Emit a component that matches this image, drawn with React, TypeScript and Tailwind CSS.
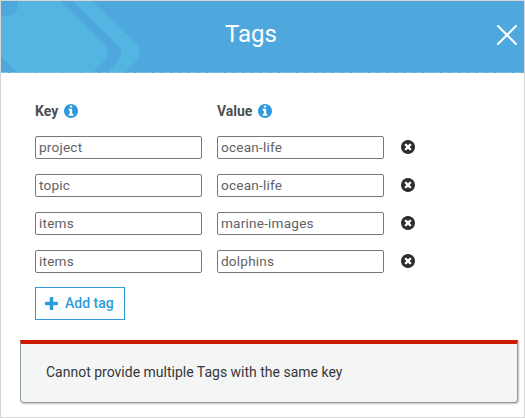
import React from "react";

const disc =
  "m387-226q0 209-103 385.5t-279.5 279.5-385.5 103-385.5-103-279.5-279.5-103-385.5 103-385.5 279.5-279.5 385.5-103 385.5 103 279.5 279.5 103 385.5z";

function InfoIcon() {
  return (
    <svg className="size-[14px] fill-[#2c9bdb]" viewBox="128 128 1536 1536">
      <path d="M1152 1376v-160q0-14-9-23t-23-9h-96v-512q0-14-9-23t-23-9h-320q-14 0-23 9t-9 23v160q0 14 9 23t23 9h96v320h-96q-14 0-23 9t-9 23v160q0 14 9 23t23 9h448q14 0 23-9t9-23zm-128-896v-160q0-14-9-23t-23-9h-192q-14 0-23 9t-9 23v160q0 14 9 23t23 9h192q14 0 23-9t9-23zm640 416q0 209-103 385.5t-279.5 279.5-385.5 103-385.5-103-279.5-279.5-103-385.5 103-385.5 279.5-279.5 385.5-103 385.5 103 279.5 279.5 103 385.5z" />
    </svg>
  );
}

function RemoveIcon() {
  return (
    <svg className="size-[14px] fill-[#2b2d30]" viewBox="128 128 1536 1536">
      <path
        d={
          "M1277 1122q0-26-19-45l-181-181 181-181q19-19 19-45 0-27-19-46l-90-90q-19-18-46-18-26 0-45 18l-181 181-181-181q-19-18-45-18-27 0-46 18l-90 90q-19 19-19 46 0 26 19 45l181 181-181 181q-19 19-19 45 0 27 19 46l90 90q19 18 46 18 26 0 45-18l181-181 181 181q19 18 45 18 27 0 46-18l90-90q19-19 19-46z" +
          disc
        }
      />
    </svg>
  );
}

function PlusIcon() {
  return (
    <svg className="size-[13px] fill-[#2c9bdb]" viewBox="192 192 1408 1408">
      <path d="M1600 800v192q0 40-28 68t-68 28h-416v416q0 40-28 68t-68 28h-192q-40 0-68-28t-28-68v-416h-416q-40 0-68-28t-28-68v-192q0-40 28-68t68-28h416v-416q0-40 28-68t68-28h192q40 0 68 28t28 68v416h416q40 0 68 28t28 68z" />
    </svg>
  );
}

function HeaderArt() {
  return (
    <svg className="absolute left-0 top-0" width="523" height="72" viewBox="1 1 523 72">
      <defs>
        <pattern id="dots" width="8" height="8" patternUnits="userSpaceOnUse">
          <rect width="8" height="8" fill="#55b5e2" />
          <rect x="1" y="2" width="1" height="1" fill="#4eaede" />
          <rect x="5" y="6" width="1" height="1" fill="#4eaede" />
        </pattern>
      </defs>
      <path fill="url(#dots)" d="M18 1H60L104 44Q110 51 105 60L93 73H18L1 56V16H7Q18 15 18 4Z" />
      <path fill="url(#dots)" d="M73 1H92L136 43Q143 51 137 60L125 73H107L118 61Q124 52 118 45Z" />
      <path d="M1 72.5H524" stroke="#7abfe6" strokeDasharray="7 2" />
    </svg>
  );
}

const rows = [
  ["project", "ocean-life"],
  ["topic", "ocean-life"],
  ["items", "marine-images"],
  ["items", "dolphins"],
];

function Field({ value }: { value: string }) {
  return (
    <input
      className="h-[23px] w-[167px] rounded-[2px] border border-[#76777a] bg-white px-[3px] pb-[2px] text-[13.6px] tracking-[0.2px] text-[#606266] outline-none"
      defaultValue={value}
    />
  );
}

export default function App() {
  return (
    <div className="h-[418px] w-[525px] overflow-hidden border border-[#d6d6d6] bg-white font-['Roboto',sans-serif] text-[14px] text-[#4d4f53]">
      <header className="relative flex h-[72px] items-center justify-center bg-[#4ea8dd]">
        <HeaderArt />
        <h1 className="relative mr-[23px] mt-[-6px] text-[24px] leading-[32px] text-white">Tags</h1>
        <button aria-label="Close" className="absolute right-[7px] top-[24px]">
          <svg width="20" height="20" viewBox="0 0 20 20" stroke="white" strokeWidth="2" strokeLinecap="round">
            <path d="M1 1L19 19M19 1L1 19" />
          </svg>
        </button>
      </header>

      <main className="px-[34px] pt-[29px]">
        <div className="flex h-[18px] font-bold leading-[18px]">
          <div className="flex w-[182px] items-center gap-[6px]">
            Key
            <InfoIcon />
          </div>
          <div className="flex items-center gap-[6px]">
            Value
            <InfoIcon />
          </div>
        </div>
        <div className="mt-[16px] flex flex-col gap-[15px]">
          {rows.map(([key, value], i) => (
            <div key={i} className="flex h-[23px] items-center">
              <Field value={key} />
              <div className="w-[15px]" />
              <Field value={value} />
              <button aria-label="Remove tag" className="mb-px ml-[17px]">
                <RemoveIcon />
              </button>
            </div>
          ))}
        </div>
        <button className="mt-[14px] flex h-[33px] w-[90px] items-center border border-[#2c9bdb] pl-[9px] font-medium text-[#2c9bdb]">
          <PlusIcon />
          <span className="ml-[7px]">Add tag</span>
        </button>
      </main>

      <div className="ml-[19px] mt-[20px] flex h-[63px] w-[498px] items-center rounded-b-[4px] border border-t-4 border-[#929b9b] border-t-[#cc1b00] bg-[#f4f6f6] pb-[2px] pl-[25px] text-[14px] text-[#35373b] shadow-[1px_1px_2px_rgba(0,0,0,0.25)]">
        Cannot provide multiple Tags with the same key
      </div>
    </div>
  );
}
